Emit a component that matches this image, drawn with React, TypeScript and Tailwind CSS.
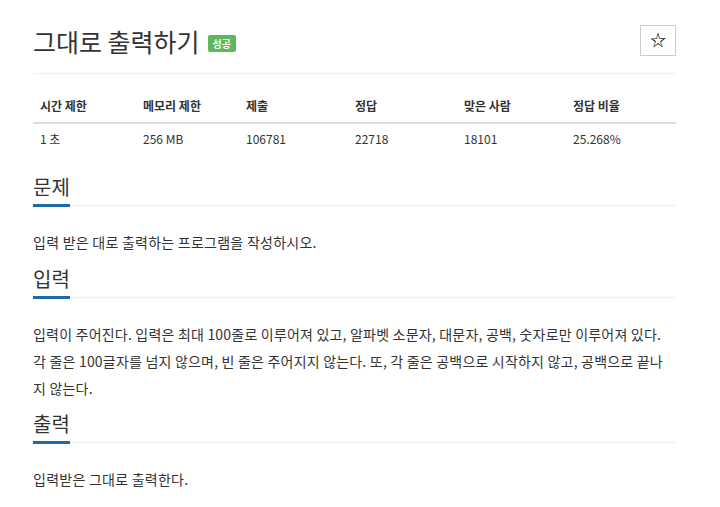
import React from "react";

const font = { fontFamily: '"Noto Sans CJK KR", "Noto Sans", sans-serif' };

function Heading({ children }: { children: React.ReactNode }) {
  return (
    <h2 className="flex border-b border-[#eeeeee]">
      <span className="text-[20px] leading-[28px] text-[#333] pb-[3px] border-b-[3px] border-[#1c6aa6] -mb-[2px] font-normal">
        {children}
      </span>
    </h2>
  );
}

export default function App() {
  const heads = ["시간 제한", "메모리 제한", "제출", "정답", "맞은 사람", "정답 비율"];
  const vals = ["1 초", "256 MB", "106781", "22718", "18101", "25.268%"];
  return (
    <div className="bg-white w-[720px] h-[507px] overflow-hidden" style={font}>
      <div className="ml-[33px] w-[643px] pt-[25px]">
        <div className="flex items-start justify-between border-b border-[#eeeeee] pb-[17px]">
          <div className="flex items-end gap-[8px] pt-[1px]">
            <span className="text-[25px] leading-[30px] text-[#333]">그대로 출력하기</span>
            <span className="mb-[4px] bg-[#5cb85c] text-white text-[10px] font-bold leading-[17px] px-[5px] rounded-[2px]">
              성공
            </span>
          </div>
          <button className="w-[36px] h-[31px] border border-[#cccccc] bg-white flex items-center justify-center text-[16px] text-black leading-none pb-[3px]">
            ☆
          </button>
        </div>
        <div className="mt-[15px] text-[12px] text-[#333]">
          <div className="grid grid-cols-[103px_103px_109px_109px_109px_1fr] border-b-2 border-[#dddddd]">
            {heads.map((h) => (
              <div key={h} className="px-[7px] py-[8px] leading-[17px] font-bold">
                {h}
              </div>
            ))}
          </div>
          <div className="grid grid-cols-[103px_103px_109px_109px_109px_1fr]">
            {vals.map((v) => (
              <div key={v} className="px-[7px] pt-[6px] pb-[8px] leading-[17px]">
                {v}
              </div>
            ))}
          </div>
        </div>
        <div className="mt-[18px]">
          <Heading>문제</Heading>
          <p className="mt-[23px] text-[14px] leading-[27px] text-[#333] tracking-[0.25px]">
            입력 받은 대로 출력하는 프로그램을 작성하시오.
          </p>
        </div>
        <div className="mt-[9px]">
          <Heading>입력</Heading>
          <p className="mt-[23px] text-[14px] leading-[27px] text-[#333] tracking-[0.2px]">
            입력이 주어진다. 입력은 최대 100줄로 이루어져 있고, 알파벳 소문자, 대문자, 공백, 숫자로만 이루어져 있다.
            <br />
            각 줄은 100글자를 넘지 않으며, 빈 줄은 주어지지 않는다. 또, 각 줄은 공백으로 시작하지 않고, 공백으로 끝나
            <br />
            지 않는다.
          </p>
        </div>
        <div className="mt-[8px]">
          <Heading>출력</Heading>
          <p className="mt-[23px] text-[14px] leading-[27px] text-[#333] tracking-[0.25px]">입력받은 그대로 출력한다.</p>
        </div>
      </div>
    </div>
  );
}
